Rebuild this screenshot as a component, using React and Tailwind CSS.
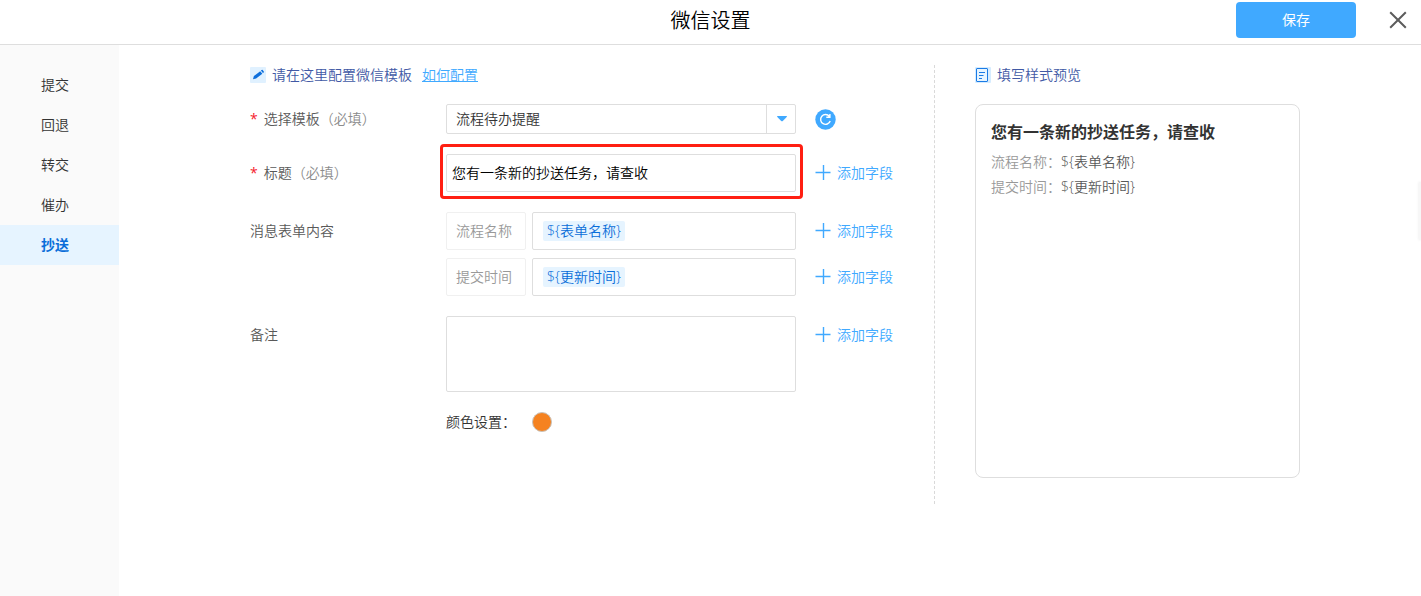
import { useState } from 'react'

const steps = ['提交', '回退', '转交', '催办', '抄送']

const formFields = [
  { id: 'flow-name', name: '流程名称', value: '${表单名称}' },
  { id: 'submit-time', name: '提交时间', value: '${更新时间}' },
]

function PencilIcon() {
  return (
    <svg width="16" height="16" viewBox="0 0 16 16" aria-hidden="true">
      <rect width="16" height="16" rx="1" fill="#e0f1ff" />
      <path d="M3 12.2l.9-3.1 6.3-4.9 2.1 2.5-6.2 4.8z" fill="#0d6fdc" />
      <path d="M10.9 3.6l.8-.6q.5-.4 1 .1l1.1 1.4q.4.6-.1 1l-.8.6z" fill="#0d6fdc" />
    </svg>
  )
}

function DocIcon() {
  return (
    <svg width="16" height="16" viewBox="0 0 16 16" aria-hidden="true">
      <rect width="16" height="16" rx="1" fill="#d6ecff" />
      <rect x="1.5" y="1.5" width="11" height="13" rx=".5" fill="#e6f4ff" stroke="#1a7be6" />
      <path d="M4 5.5h6M4 8.5h4.5M4 11.5h3" stroke="#1a7be6" strokeWidth="1" />
    </svg>
  )
}

function RefreshIcon() {
  return (
    <svg width="22" height="22" viewBox="0 0 22 22" aria-hidden="true">
      <circle cx="10.5" cy="11.5" r="10.2" fill="#40a9ff" />
      <path
        d="M15.2 13a4.9 4.9 0 1 1-.8-4.6M14.9 6v3.3h-3.6"
        fill="none"
        stroke="#fff"
        strokeWidth="1.4"
      />
    </svg>
  )
}

function AddField() {
  return (
    <button type="button" className="flex h-[38px] cursor-pointer items-center gap-1.5 text-[#40a9ff]">
      <svg width="16" height="16" viewBox="0 0 16 16" aria-hidden="true">
        <path d="M.5 7.5h15M8.5 0v15" stroke="currentColor" strokeWidth="1.4" />
      </svg>
      添加字段
    </button>
  )
}

function Required() {
  return <span className="mr-1.5 font-normal text-[#f5222d]">*</span>
}

export default function App() {
  const [active, setActive] = useState('抄送')
  const [title, setTitle] = useState('您有一条新的抄送任务，请查收')
  const [remark, setRemark] = useState('')

  return (
    <div className="relative flex min-h-screen flex-col overflow-hidden bg-white font-['Open_Sans','Noto_Sans_CJK_SC',sans-serif] text-sm font-[350] text-[#333]">
      {/* Header */}
      <header className="grid grid-cols-[1fr_auto_1fr] border-b border-[#dedede] pt-0.5 pb-1">
        <h1 className="col-start-2 text-xl leading-[38px] font-[350] text-black">微信设置</h1>
        <div className="flex items-start justify-end gap-[33px] pr-3.5">
          <button type="button" className="h-9 w-[120px] cursor-pointer rounded bg-[#40a9ff] font-normal text-white">
            保存
          </button>
          <button type="button" aria-label="关闭" className="flex h-9 cursor-pointer items-center">
            <svg width="18" height="18" viewBox="0 0 18 18" aria-hidden="true">
              <path d="M1.2 1.2l15.6 15.6M16.8 1.2L1.2 16.8" stroke="#5c5c5c" strokeWidth="2" />
            </svg>
          </button>
        </div>
      </header>

      <div className="flex grow">
        {/* Steps */}
        <nav className="w-[119px] shrink-0 bg-[#fafafa] pt-5">
          {steps.map(step => (
            <button
              key={step}
              type="button"
              onClick={() => setActive(step)}
              className={`block h-10 w-full cursor-pointer pl-[41px] text-left ${
                step === active ? 'bg-[#e6f4ff] font-bold text-[#096dd9]' : ''
              }`}
            >
              {step}
            </button>
          ))}
        </nav>

        <main className="flex grow items-start justify-center pt-5">
          {/* Template form */}
          <form className="w-[695px] border-r border-dashed border-[#d9d9d9] pb-[72px] pl-2.5">
            <div className="mb-[19px] flex h-5 items-center gap-1.5 text-[#4159a5]">
              <PencilIcon />
              请在这里配置微信模板
              <a href="#help" className="ml-1 text-[#40a9ff] underline">如何配置</a>
            </div>

            <div className="grid grid-cols-[196px_350px_auto] items-start gap-y-5 text-[#595959]">
              <label htmlFor="template" className="leading-[30px]">
                <Required />
                选择模板<span className="text-[#8c8c8c]">（必填）</span>
              </label>
              <div className="relative">
                <select
                  id="template"
                  className="block h-[30px] w-full appearance-none rounded-xs border border-[#dedede] bg-white px-[9px] text-[#333]"
                >
                  <option>流程待办提醒</option>
                </select>
                <span className="pointer-events-none absolute inset-y-0 right-0 flex w-[30px] items-center justify-center border-l border-[#dedede]">
                  <svg width="10" height="6" viewBox="0 0 10 6" aria-hidden="true">
                    <path d="M.4 0h9.2q.6.4.1 1L5.8 5q-.8.7-1.6 0L.3 1q-.4-.6.1-1z" fill="#40a9ff" />
                  </svg>
                </span>
              </div>
              <button type="button" aria-label="刷新" className="ml-[19px] flex h-[30px] cursor-pointer items-center">
                <RefreshIcon />
              </button>

              <label htmlFor="title" className="leading-[38px]">
                <Required />
                标题<span className="text-[#8c8c8c]">（必填）</span>
              </label>
              <div className="relative">
                <input
                  id="title"
                  type="text"
                  value={title}
                  onChange={e => setTitle(e.target.value)}
                  className="block h-[38px] w-full rounded-xs border border-[#dedede] px-[5px] pb-0.5 text-black"
                />
                <div className="pointer-events-none absolute -top-2.5 -right-[7px] -bottom-[7px] -left-1.5 rounded-sm border-3 border-[#ff1f12]" />
              </div>
              <div className="ml-[19px]">
                <AddField />
              </div>

              <div className="leading-[38px]">消息表单内容</div>
              <div className="col-span-2 flex flex-col gap-2">
                {formFields.map(field => (
                  <div key={field.id} className="flex">
                    <label
                      htmlFor={field.id}
                      className="mr-1.5 w-20 rounded-xs border border-[#f0f0f0] pl-[9px] leading-9 text-[#999]"
                    >
                      {field.name}
                    </label>
                    <div className="flex h-[38px] w-[264px] items-center rounded-xs border border-[#dedede] px-2.5">
                      <span className="shrink-0 rounded-xs bg-[#e6f4ff] px-1 leading-5 text-[#096dd9]">
                        {field.value}
                      </span>
                      <input id={field.id} type="text" className="w-0 grow outline-none" />
                    </div>
                    <div className="ml-[19px]">
                      <AddField />
                    </div>
                  </div>
                ))}
              </div>

              <label htmlFor="remark" className="leading-[38px]">备注</label>
              <textarea
                id="remark"
                value={remark}
                onChange={e => setRemark(e.target.value)}
                className="block h-[76px] w-full resize-none rounded-xs border border-[#dedede] px-1.5 py-2"
              />
              <div className="ml-[19px]">
                <AddField />
              </div>

              <div className="col-start-2 flex h-5 items-center text-[#333]">
                <span className="w-[86px]">颜色设置：</span>
                <button
                  type="button"
                  aria-label="颜色设置"
                  className="size-5 cursor-pointer rounded-full border border-[#c8c2bb] bg-[#f58220]"
                />
              </div>
            </div>
          </form>

          {/* Preview */}
          <section className="ml-10 w-[325px]">
            <h2 className="mb-[19px] flex h-5 items-center gap-1.5 font-[350] text-[#4159a5]">
              <DocIcon />
              填写样式预览
            </h2>
            <div className="min-h-[374px] rounded-lg border border-[#dedede] px-[15px] py-[15px]">
              <h3 className="mb-[5px] text-base font-bold">{title}</h3>
              {formFields.map(field => (
                <p key={field.id} className="leading-[25px] text-[#595959]">
                  <span className="text-[#999]">{field.name}：</span>
                  {field.value}
                </p>
              ))}
            </div>
          </section>
        </main>
      </div>

      {/* Collapsed drawer handle */}
      <div className="absolute top-[182px] right-0 h-[58px] w-0.5 bg-[#f7f7f7] shadow-[0_0_3px_rgba(0,0,0,0.1)]" />
    </div>
  )
}
